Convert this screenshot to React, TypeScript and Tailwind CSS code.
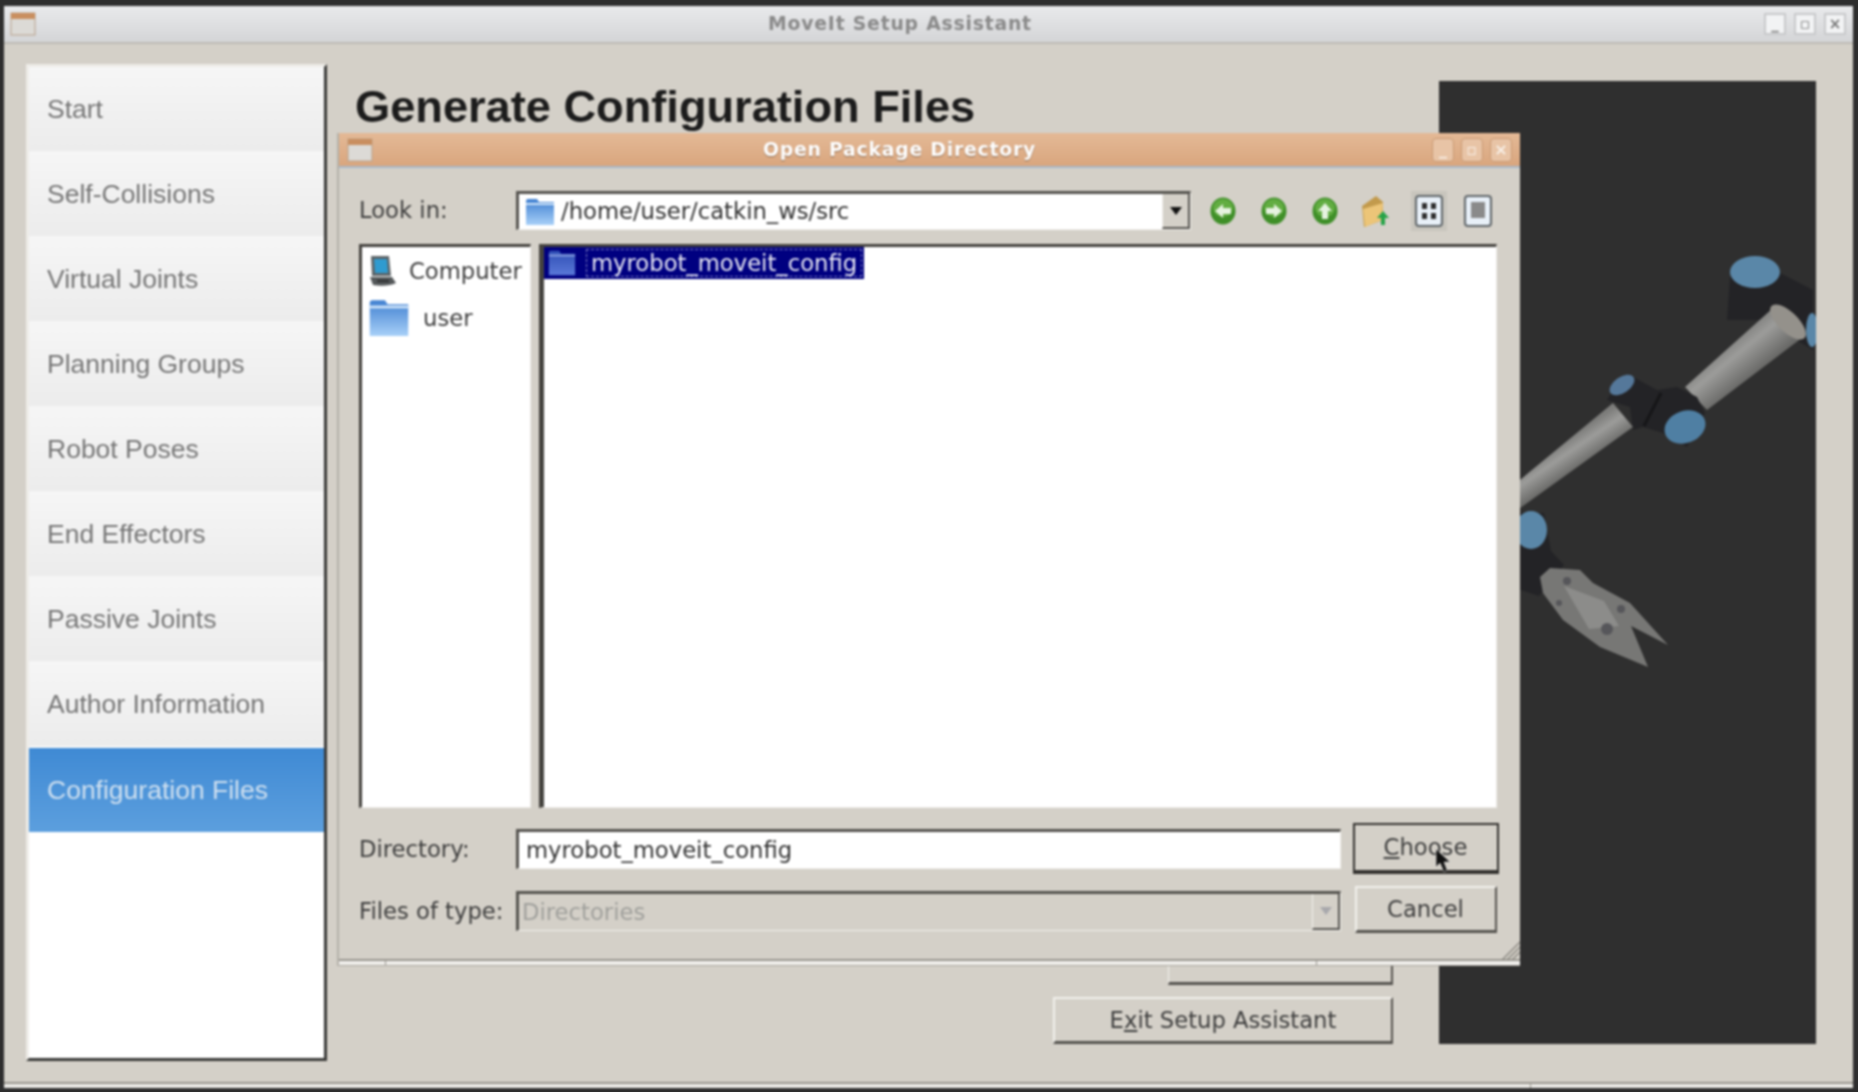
const navItems = [
  "Start",
  "Self-Collisions",
  "Virtual Joints",
  "Planning Groups",
  "Robot Poses",
  "End Effectors",
  "Passive Joints",
  "Author Information",
];

const uiFont = "font-['DejaVu_Sans',sans-serif]";

function WindowIcon() {
  return (
    <svg width="26" height="24" viewBox="0 0 26 24" className="shrink-0">
      <rect x="1" y="1" width="24" height="22" fill="#dcdad6" stroke="#b8a18c" />
      <rect x="1" y="1" width="24" height="6" fill="#c98f60" />
    </svg>
  );
}

function Folder({ size = 28, dark = false }: { size?: number; dark?: boolean }) {
  const id = dark ? "folderDark" : "folderLight";
  return (
    <svg width={size} height={size} viewBox="0 0 32 32" className="shrink-0">
      <defs>
        <linearGradient id={id} x1="0" y1="0" x2="0" y2="1">
          <stop offset="0" stopColor={dark ? "#2f4fb5" : "#3f7fd0"} />
          <stop offset="1" stopColor={dark ? "#5a78d8" : "#a8d0f8"} />
        </linearGradient>
      </defs>
      <path d="M2 5 Q2 3 4 3 H13 L15 6 H30 V29 H2 Z" fill={`url(#${id})`} />
      <rect x="2" y="7" width="28" height="2" fill={dark ? "#8aa0e0" : "#cfe4fa"} />
    </svg>
  );
}

function Computer() {
  return (
    <svg width="30" height="32" viewBox="0 0 30 32" className="shrink-0">
      <path d="M4 1 H22 L24 21 H5 Z" fill="#5c6468" />
      <path d="M7 4 H20 L21 18 H8 Z" fill="#2f9bd0" />
      <path d="M3 22 H25 L29 28 Q20 32 6 30 Z" fill="#54585a" />
      <rect x="10" y="25" width="12" height="2" fill="#2d2f30" />
    </svg>
  );
}

function NavArrow({ dir }: { dir: "left" | "right" | "up" }) {
  const rotate = dir === "left" ? 0 : dir === "right" ? 180 : 90;
  return (
    <svg width="26" height="28" viewBox="0 0 26 28" className="shrink-0">
      <ellipse cx="13" cy="14" rx="12.5" ry="13.5" fill="#3f8f28" />
      <ellipse cx="13" cy="11" rx="10" ry="9" fill="#62ad42" />
      <path
        d="M5 14 L13 7 V11 H21 V17 H13 V21 Z"
        fill="#e6f2e0"
        transform={`rotate(${rotate} 13 14)`}
      />
    </svg>
  );
}

function NewFolder() {
  return (
    <svg width="30" height="34" viewBox="0 0 30 34" className="shrink-0">
      <path d="M2 12 L16 2 L23 8 V26 L4 33 Z" fill="#c29a4c" />
      <path d="M3 15 L23 9 L22 26 L5 33 Z" fill="#ecc578" />
      <path d="M23 17 L29 24 L25 24 V31 L21 31 V24 L17 24 Z" fill="#27a348" />
    </svg>
  );
}

function ViewButton({ kind }: { kind: "list" | "detail" }) {
  return (
    <svg width="28" height="32" viewBox="0 0 28 32" className="shrink-0">
      <rect x="1" y="1" width="26" height="30" rx="3" fill="#e8f0f8" stroke="#5e6468" strokeWidth="2" />
      {kind === "list" ? (
        <g fill="#2d2d2d">
          <rect x="7" y="8" width="5" height="6" />
          <rect x="16" y="8" width="5" height="6" />
          <rect x="7" y="18" width="5" height="6" />
          <rect x="16" y="18" width="5" height="6" />
        </g>
      ) : (
        <rect x="7" y="7" width="14" height="16" fill="#8a8a8a" />
      )}
    </svg>
  );
}

function CaretBox({ disabled = false }: { disabled?: boolean }) {
  return (
    <div className="w-[28px] h-full flex items-center justify-center bg-[#d4d0c8] border-r-2 border-b-2 border-[#55534f] border-l border-l-[#f2f0ec]">
      <svg width="12" height="8" viewBox="0 0 12 8">
        <path d="M0 0 H12 L6 8 Z" fill={disabled ? "#a8a8ac" : "#111111"} />
      </svg>
    </div>
  );
}

function RobotView() {
  return (
    <svg viewBox="0 0 377 963" className="w-full h-full block">
      <defs>
        <linearGradient id="armUpper" gradientUnits="userSpaceOnUse" x1="285" y1="262" x2="312" y2="295">
          <stop offset="0" stopColor="#7c7c7a" />
          <stop offset="0.4" stopColor="#9c9c9a" />
          <stop offset="1" stopColor="#6a6a68" />
        </linearGradient>
        <linearGradient id="armLower" gradientUnits="userSpaceOnUse" x1="125" y1="360" x2="142" y2="385">
          <stop offset="0" stopColor="#7c7c7a" />
          <stop offset="0.4" stopColor="#9c9c9a" />
          <stop offset="1" stopColor="#6a6a68" />
        </linearGradient>
      </defs>
      {/* shoulder */}
      <path d="M291 196 L288 239 L324 239 L374 269 V209 L341 192 Z" fill="#232326" />
      <ellipse cx="316" cy="191" rx="25" ry="16" fill="#5a87a8" />
      <ellipse cx="373" cy="249" rx="6" ry="17" fill="#5a87a8" />
      {/* upper arm */}
      <polygon points="246,306 334,227 364,256 268,329" fill="url(#armUpper)" />
      <ellipse cx="349" cy="241" rx="23" ry="10" fill="#94918b" transform="rotate(44 349 241)" />
      {/* elbow */}
      <path
        d="M168 319 L176 306 L194 296 L218 309 L238 306 L258 316 L266 332 L248 366 L224 352 L204 346 L194 349 L191 326 Z"
        fill="#232326"
      />
      <ellipse cx="183" cy="304" rx="14" ry="8" fill="#55789a" transform="rotate(-35 183 304)" />
      <path d="M222 312 L205 345" stroke="#161618" strokeWidth="3" />
      <ellipse cx="246" cy="346" rx="21" ry="16" fill="#4f7fa3" transform="rotate(-20 246 346)" />
      {/* forearm */}
      <polygon points="70,408 174,322 194,346 70,435" fill="url(#armLower)" />
      {/* wrist */}
      <path d="M70 432 H105 L112 470 L125 484 L100 515 L70 505 Z" fill="#232326" />
      <ellipse cx="92" cy="449" rx="16" ry="19" fill="#5a87a8" />
      {/* gripper */}
      <path
        d="M101 496 L111 487 L141 489 L154 502 L191 522 L229 564 L192 545 L209 586 L161 566 L124 539 L104 512 Z"
        fill="#777775"
      />
      <path d="M125 505 L165 520 L180 545 L150 548 Z" fill="#8c8c8a" />
      <circle cx="128" cy="500" r="4" fill="#56565a" />
      <circle cx="168" cy="548" r="6" fill="#56565a" />
      <circle cx="182" cy="528" r="4" fill="#56565a" />
      <circle cx="120" cy="522" r="3" fill="#56565a" />
    </svg>
  );
}

function Dialog() {
  return (
    <div className={`absolute left-[337px] top-[133px] w-[1183px] h-[833px] flex flex-col bg-[#d4d0c8] border-l-2 border-[#b4b1a9] ${uiFont} text-[22.7px] text-[#3e3e3e]`}>
      <div className="h-[35px] shrink-0 flex items-center px-2 bg-gradient-to-b from-[#e4b996] to-[#d9a67e] border-b-2 border-[#a8b8c8]">
        <WindowIcon />
        <span className="flex-1 text-center text-white font-bold text-[18.8px] tracking-[0.8px] pr-[6px] pt-[2px] [text-shadow:0_1px_1px_#8a6a50]">
          Open Package Directory
        </span>
        <div className="flex gap-[7px]">
          {["_", "▫", "×"].map((c) => (
            <span
              key={c}
              className="w-[22px] h-[24px] flex items-center justify-center rounded-sm border border-[#c99a74] bg-[#e8c4a6] text-[#f8f0e8] text-[16px] font-bold leading-none"
            >
              {c}
            </span>
          ))}
        </div>
      </div>

      <div className="flex-1 flex flex-col pl-[20px] pr-[21px] pt-[23px] min-h-0">
        <div className="h-[39px] shrink-0 flex items-center">
          <span className="w-[157px]">Look in:</span>
          <div className="w-[675px] h-full flex items-stretch bg-white border-t-[3px] border-l-[3px] border-[#55534f] border-b border-r border-b-[#f2f0ec] border-r-[#f2f0ec]">
            <div className="flex-1 flex items-center gap-[5px] pl-[5px] text-[#333333]">
              <Folder size={32} />
              <span>/home/user/catkin_ws/src</span>
            </div>
            <CaretBox />
          </div>
          <div className="flex items-center gap-[25px] pl-[19px]">
            <NavArrow dir="left" />
            <NavArrow dir="right" />
            <NavArrow dir="up" />
            <span className="-ml-[3px]">
              <NewFolder />
            </span>
            <div className="flex items-center gap-[21px]">
              <span className="p-[4px] -m-[4px] bg-[#c8c5bd]">
                <ViewButton kind="list" />
              </span>
              <ViewButton kind="detail" />
            </div>
          </div>
        </div>

        <div className="h-[564px] shrink-0 mt-[14px] mr-[2px] flex gap-[8px]">
          <div className="w-[172px] flex flex-col gap-[8px] pl-[4px] pt-[7px] bg-white border-t-[3px] border-l-[3px] border-[#45433f] border-b border-r border-b-[#eeece8] border-r-[#eeece8] overflow-hidden">
            <div className="flex items-center gap-[12px] pl-[1px]">
              <Computer />
              <span>Computer</span>
            </div>
            <div className="flex items-center gap-[12px] pl-[1px]">
              <Folder size={44} />
              <span>user</span>
            </div>
          </div>
          <div className="flex-1 bg-white border-t-[3px] border-l-[5px] border-[#45433f] border-b border-r border-b-[#eeece8] border-r-[#eeece8]">
            <div className="w-fit h-[32px] flex items-center gap-[9px] bg-[#000080] text-[#e8e8f4] pl-[3px] pr-[2px]">
              <Folder size={30} dark />
              <span className="border border-dashed border-[#8080c0] px-[4px] leading-[26px]">myrobot_moveit_config</span>
            </div>
          </div>
        </div>

        <div className="shrink-0 flex mt-[15px]">
          <div className="flex-1 flex flex-col">
            <div className="h-[52px] flex items-center">
              <span className="w-[157px]">Directory:</span>
              <div className="w-[825px] h-[40px] flex items-center pl-[7px] bg-white border-t-[3px] border-l-[3px] border-[#55534f] border-b border-r border-b-[#f2f0ec] border-r-[#f2f0ec] text-[#333333]">
                myrobot_moveit_config
              </div>
            </div>
            <div className="h-[40px] mt-[16px] flex items-center">
              <span className="w-[157px] whitespace-nowrap">Files of type:</span>
              <div className="w-[825px] h-[40px] flex items-stretch border-t-[3px] border-l-[3px] border-[#55534f] border-b border-r border-b-[#f2f0ec] border-r-[#f2f0ec]">
                <span className="flex-1 pl-[3px] text-[#a0a09c] flex items-center">Directories</span>
                <CaretBox disabled />
              </div>
            </div>
          </div>
          <div className="w-[147px] shrink-0 flex flex-col items-center gap-[12px]">
            <button className="w-[146px] h-[51px] bg-[#d4d0c8] border-2 border-[#33312e] border-b-[4px]">
              <span className="underline">C</span>hoose
            </button>
            <button className="w-[142px] h-[47px] bg-[#d4d0c8] border-t-2 border-l-2 border-[#f2f0ec] border-b-[3px] border-r-2 border-b-[#55534f] border-r-[#55534f]">
              Cancel
            </button>
          </div>
        </div>
      </div>

      <div className="h-[7px] shrink-0 flex bg-[#f0efec] border-t-2 border-[#98958e] border-b border-b-[#a8a59e]">
        <div className="w-[47px] border-r border-[#98958e]" />
        <div className="flex-1" />
        <div className="w-[204px] border-l border-[#98958e]" />
      </div>
      <svg width="20" height="20" viewBox="0 0 20 20" className="absolute right-0 bottom-[6px]">
        <path d="M2 20 L20 2 M7 20 L20 7 M12 20 L20 12" stroke="#8e8b84" strokeWidth="1.5" />
      </svg>
      {/* mouse pointer over the Choose button */}
      <svg width="18" height="26" viewBox="0 0 18 26" className="absolute left-[1096px] top-[715px]">
        <path d="M1 1 V19 L5 15 L9 24 L12 22 L9 14 H15 Z" fill="#101010" stroke="#e8e8e8" strokeWidth="0.5" />
      </svg>
    </div>
  );
}

export default function App() {
  return (
    <div className="w-[1858px] h-[1092px] overflow-hidden bg-[#2e2e2e]">
      <div className="relative w-full h-full blur-[0.9px]">
        <div className="h-[6px]" />
        <div className="h-[1082px] ml-[4px] mr-[5px] flex flex-col bg-[#d4d0c8]">
          <div className="h-[38px] shrink-0 flex items-center px-[6px] bg-gradient-to-b from-[#e9eaec] to-[#d4d5d7] border-b-2 border-[#bdbbb5]">
            <WindowIcon />
            <span className="flex-1 text-center font-['DejaVu_Sans',sans-serif] font-bold text-[18.8px] tracking-[0.8px] text-[#8a8a8a]">
              MoveIt Setup Assistant
            </span>
            <div className="flex gap-[8px] pr-[1px]">
              {["_", "▫", "×"].map((c) => (
                <span
                  key={c}
                  className="w-[22px] h-[22px] flex items-center justify-center border-2 border-[#c8c9cb] bg-[#f2f3f4] text-[#777777] text-[15px] font-bold leading-none font-['DejaVu_Sans',sans-serif]"
                >
                  {c}
                </span>
              ))}
            </div>
          </div>

          <div className="flex-1 flex min-h-0 pl-[22px] pr-[37px]">
            <div className="w-[301px] shrink-0 mt-[20px] mb-[21px] flex flex-col bg-white border-t-[3px] border-l-[3px] border-[#eeece8] border-r-[3px] border-b-[3px] border-r-[#3a3a38] border-b-[#3a3a38] font-['Liberation_Sans',sans-serif] text-[26.5px] text-[#767676]">
              {navItems.map((label) => (
                <div
                  key={label}
                  className="h-[85px] shrink-0 flex items-center pl-[18px] pt-[2px] bg-gradient-to-b from-[#f6f6f6] to-[#ececec] border-b border-[#f4f4f4]"
                >
                  {label}
                </div>
              ))}
              <div className="h-[84px] mt-[1px] shrink-0 flex items-center pl-[18px] pt-[1px] bg-gradient-to-b from-[#3f8ad4] to-[#5c9fde] text-[#cfe0f0]">
                Configuration Files
              </div>
            </div>

            <div className="flex-1 flex flex-col min-w-0 pl-[28px] pr-[46px] mb-[38px]">
              <h1 className="font-['Liberation_Sans',sans-serif] font-bold text-[45.2px] leading-none text-[#1c1c1c] mt-[40px] whitespace-nowrap">
                Generate Configuration Files
              </h1>
              <div className="flex-1" />
              <div className={`flex flex-col items-end gap-[12px] ${uiFont} text-[22.7px] text-[#3e3e3e]`}>
                <button className="w-[225px] h-[47px] bg-[#d4d0c8] border-r-2 border-[#55534f] border-b-[3px] border-b-[#55534f] border-l border-l-[#f2f0ec]" />
                <button className="w-[340px] h-[47px] bg-[#d4d0c8] border-t-2 border-l-2 border-[#f2f0ec] border-r-2 border-b-[3px] border-r-[#55534f] border-b-[#55534f]">
                  E<span className="underline">x</span>it Setup Assistant
                </button>
              </div>
            </div>

            <div className="w-[377px] shrink-0 mt-[37px] mb-[38px] bg-[#2f2f2f]">
              <RobotView />
            </div>
          </div>

          <div className="h-[6px] shrink-0 flex bg-[#eceae6] border-t-2 border-[#98958e]">
            <div className="flex-1" />
            <div className="w-[323px] border-l border-[#98958e]" />
          </div>
        </div>
        <Dialog />
      </div>
    </div>
  );
}
